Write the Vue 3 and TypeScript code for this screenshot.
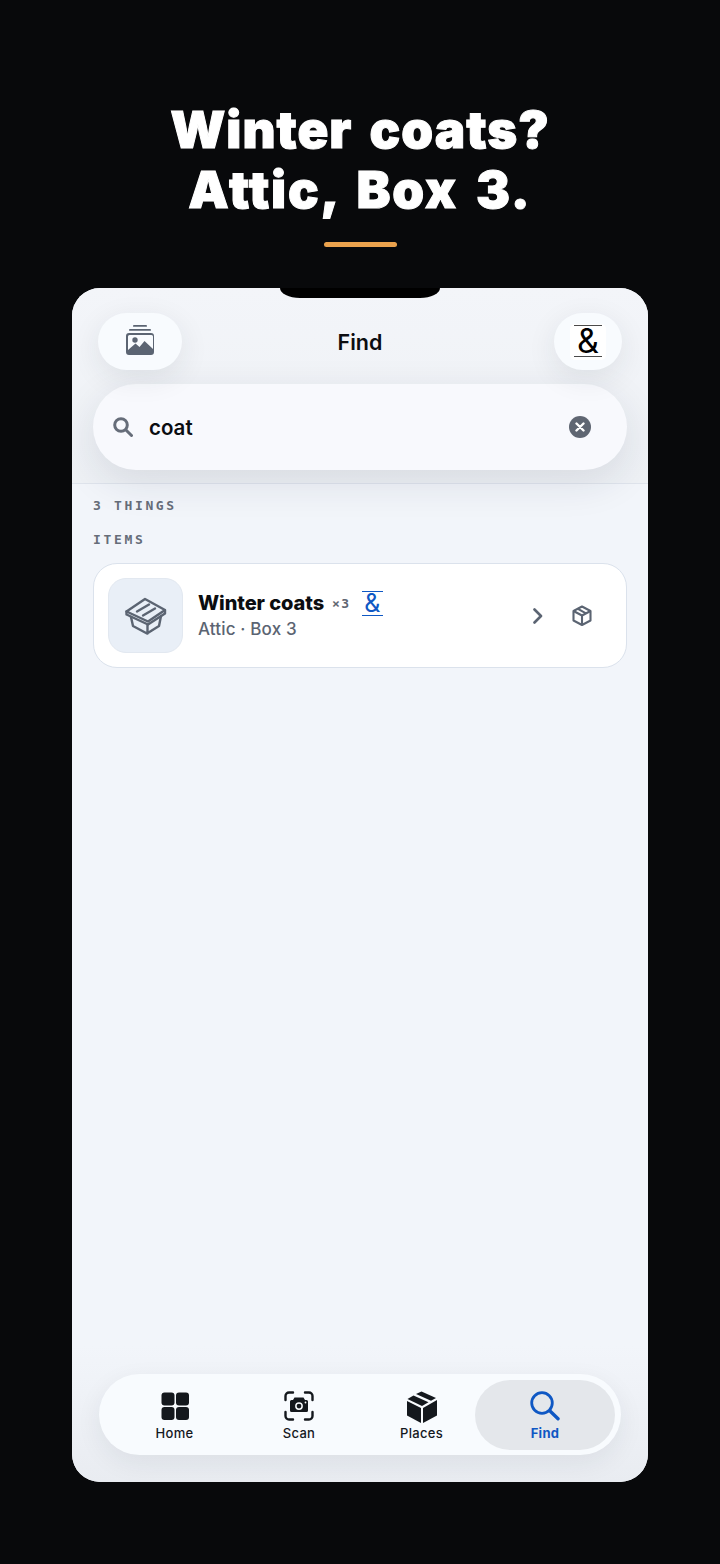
<script setup lang="ts">
type Tab = { label: string; icon: string; active?: boolean };

const tabs: Tab[] = [
  { label: "Home", icon: "home" },
  { label: "Scan", icon: "scan" },
  { label: "Places", icon: "places" },
  { label: "Find", icon: "find", active: true },
];
</script>

<template>
  <div class="page">
    <h1 class="headline">Winter coats?<br /><span class="line2">Attic, Box 3.</span></h1>
    <div class="accent"></div>

    <div class="screen">
      <div class="notch"></div>

      <header class="header">
        <div class="topbar">
          <button class="pill pillLeft">
            <svg class="stackIcon" width="30" height="30" viewBox="0 0 30 30">
              <rect x="8" y="0" width="14" height="1.800" rx="0.900" fill="#5b6472" />
              <rect x="4" y="4" width="22" height="1.800" rx="0.900" fill="#5b6472" />
              <path
                fill="#5b6472"
                fill-rule="evenodd"
                d="M4 8h22a3 3 0 0 1 3 3v16a3 3 0 0 1-3 3H4a3 3 0 0 1-3-3V11a3 3 0 0 1 3-3Zm-1 3.500v13.500l7.500-6.500 4 3.500 5-6 8.500 8V11.500a1.500 1.500 0 0 0-1.500-1.500h-22A1.500 1.500 0 0 0 3 11.500Z"
              />
              <circle cx="10" cy="15" r="2.700" fill="#5b6472" />
            </svg>
          </button>
          <span class="title">Find</span>
          <button class="pill pillRight">
            <span class="ampBox"><span class="amp">&amp;</span></span>
          </button>
        </div>

        <div class="search">
          <svg width="20" height="20" viewBox="0 0 20 20" fill="none" stroke="#666d79" stroke-width="3" stroke-linecap="round">
            <circle cx="8" cy="8" r="6.300" />
            <path d="M13 13l5.500 5.500" />
          </svg>
          <span class="query">coat</span>
          <span class="clear">
            <svg width="10" height="10" viewBox="0 0 10 10" stroke="#fff" stroke-width="2.400" stroke-linecap="round">
              <path d="M1.500 1.500l7 7M8.500 1.500l-7 7" />
            </svg>
          </span>
        </div>
      </header>

      <main class="results">
        <div class="label count">3 THINGS</div>
        <div class="label">ITEMS</div>

        <div class="card">
          <div class="thumb">
            <svg width="42" height="38" viewBox="0 0 42 38" fill="none" stroke="#5b6472" stroke-width="2.400" stroke-linejoin="round" stroke-linecap="round">
              <path d="M1.500 14.500 20 2l20 11-17 11.500Z" />
              <path d="M1.500 14.500v3l21.500 10 17-11v-3" />
              <path d="M12 14.500 24 7.500M18 18.500l12-7" />
              <path d="M6 20l2 9 14 7.500 12-7.500 2-10M22.500 27.500v9" />
            </svg>
          </div>
          <div class="info">
            <div class="nameRow">
              <span class="name">Winter coats</span>
              <span class="qty">×3</span>
              <span class="tag">&amp;</span>
            </div>
            <div class="place">Attic · Box 3</div>
          </div>
          <svg class="chevron" width="12" height="16" viewBox="0 0 12 16" fill="none" stroke="#5b6472" stroke-width="2.600" stroke-linecap="round" stroke-linejoin="round">
            <path d="M2.500 1.500 9 8l-6.500 6.500" />
          </svg>
          <svg class="box" width="20" height="21" viewBox="0 0 20 21" fill="none" stroke="#5b6472" stroke-width="2.100" stroke-linejoin="round">
            <path d="M10 1.500 18.500 6v9.500L10 20l-8.500-4.500V6Z" />
            <path d="M1.500 6 10 10.500 18.500 6M10 10.500V20M5.500 3.700l8.500 4.600" />
          </svg>
        </div>
      </main>

      <div class="navWrap">
        <nav class="nav">
          <div v-for="tab in tabs" :key="tab.label" class="tab" :class="{ active: tab.active }">
            <span class="tabIcon">
              <svg v-if="tab.icon === 'home'" width="30" height="30" viewBox="0 0 30 30" fill="#14181d">
                <rect x="1.500" y="1.500" width="13" height="13" rx="3" />
                <rect x="16" y="1.500" width="13" height="13" rx="3" />
                <rect x="1.500" y="16" width="13" height="13" rx="3" />
                <rect x="16" y="16" width="13" height="13" rx="3" />
              </svg>
              <svg v-else-if="tab.icon === 'scan'" width="30" height="30" viewBox="0 0 30 30" fill="none">
                <path
                  d="M1.500 9V5a3.500 3.500 0 0 1 3.500-3.500h4M21 1.500h4A3.500 3.500 0 0 1 28.500 5v4M28.500 21v4a3.500 3.500 0 0 1-3.500 3.500h-4M9 28.500H5A3.500 3.500 0 0 1 1.500 25v-4"
                  stroke="#14181d"
                  stroke-width="2.400"
                  stroke-linecap="round"
                />
                <path
                  fill="#14181d"
                  fill-rule="evenodd"
                  d="M10.500 6.500h9l1.500 2.500h1.500a1.500 1.500 0 0 1 1.500 1.500v9a1.500 1.500 0 0 1-1.500 1.500h-15A1.500 1.500 0 0 1 6 19.500v-9A1.500 1.500 0 0 1 7.500 9H9Zm4.500 4.700a3.900 3.900 0 1 0 0 7.800 3.900 3.900 0 0 0 0-7.800Z"
                />
                <circle cx="15" cy="15.100" r="2.400" fill="#14181d" />
                <circle cx="21.500" cy="11.500" r="0.900" fill="#fff" />
              </svg>
              <svg v-else-if="tab.icon === 'places'" width="32" height="33" viewBox="0 0 32 33" fill="#14181d">
                <path d="M10 4 15.500 1.500 30 8l-5 2.800Z" />
                <path d="M7.500 5.500 22.500 12.300 16 16 1.500 9Z" />
                <path d="M1 11l14 7v15L1 25.500Z" />
                <path d="M17 18l14-8v15.500L17 33Z" />
              </svg>
              <svg v-else width="30" height="30" viewBox="0 0 30 30" fill="none" stroke="#0f58c4" stroke-width="2.800" stroke-linecap="round">
                <circle cx="12" cy="12" r="10.300" />
                <path d="M20 20l8 7.700" stroke-width="3.400" />
              </svg>
            </span>
            <span class="tabLabel">{{ tab.label }}</span>
          </div>
        </nav>
      </div>
    </div>
  </div>
</template>

<style>
html,
body {
  margin: 0;
  background: #08090b;
}
</style>

<style scoped>
.page {
  box-sizing: border-box;
  width: 720px;
  height: 1564px;
  padding-top: 100px;
  background: #08090b;
  display: flex;
  flex-direction: column;
  align-items: center;
  font-family: Inter, "Liberation Sans", sans-serif;
}

.headline {
  margin: 0;
  color: #fff;
  font-family: Inter, "Liberation Sans", sans-serif;
  font-weight: 900;
  font-size: 51px;
  line-height: 60px;
  text-align: center;
  letter-spacing: 1px;
  word-spacing: 6px;
  -webkit-text-stroke: 1px #fff;
}

.line2 {
  letter-spacing: 1.800px;
}

.accent {
  width: 73px;
  height: 5px;
  margin-top: 22px;
  border-radius: 3px;
  background: #eba24d;
}

.screen {
  position: relative;
  width: 576px;
  height: 1194px;
  margin-top: 41px;
  border-radius: 28px;
  background: #f2f5fa;
  overflow: hidden;
  display: flex;
  flex-direction: column;
}

.notch {
  position: absolute;
  top: 0;
  left: 208px;
  width: 160px;
  height: 10px;
  background: #000;
  border-radius: 0 0 20px 20px / 0 0 10px 10px;
  z-index: 2;
}

.header {
  position: relative;
  z-index: 1;
  box-sizing: border-box;
  height: 196px;
  padding: 25px 21px 0;
  background: linear-gradient(#f3f5f9, #eef1f5);
  border-bottom: 1px solid #dfe4ec;
}

.topbar {
  display: grid;
  grid-template-columns: 1fr auto 1fr;
  align-items: center;
  height: 57px;
  padding: 0 5px;
}

.pill {
  height: 57px;
  border: 0;
  padding: 0;
  border-radius: 29px;
  background: #f8fbfe;
  display: flex;
  align-items: center;
  justify-content: center;
  box-shadow: 0 8px 30px rgba(30, 40, 60, 0.09);
}

.pillLeft {
  width: 84px;
}

.pillRight {
  width: 68px;
  justify-self: end;
}

.stackIcon {
  margin-bottom: 3px;
}

.title {
  font-size: 21.500px;
  font-weight: 600;
  color: #0b0d10;
}

.ampBox {
  width: 36px;
  height: 36px;
  border-radius: 5px;
  background: #fff;
  display: flex;
  align-items: center;
  justify-content: center;
}

.amp {
  box-sizing: border-box;
  width: 28px;
  height: 32px;
  margin-top: -2px;
  border-top: 1.500px solid #4a4a4a;
  border-bottom: 1.500px solid #4a4a4a;
  font-family: Inter, "Liberation Sans", sans-serif;
  font-size: 34px;
  line-height: 29px;
  text-align: center;
  color: #000;
}

.search {
  box-sizing: border-box;
  height: 86px;
  margin-top: 14px;
  padding: 0 36px 0 20px;
  border-radius: 43px;
  background: #f8f9fd;
  display: flex;
  align-items: center;
  box-shadow: 0 12px 40px rgba(30, 40, 60, 0.11);
}

.query {
  flex: 1;
  margin-left: 16px;
  font-size: 20.500px;
  font-weight: 600;
  color: #0b0d10;
}

.clear {
  width: 22px;
  height: 22px;
  border-radius: 50%;
  background: #5f6672;
  display: flex;
  align-items: center;
  justify-content: center;
}

.results {
  flex: 1;
  padding: 14px 21px 0;
}

.label {
  font-family: "DejaVu Sans Mono", monospace;
  font-weight: 700;
  font-size: 13px;
  line-height: 16px;
  letter-spacing: 2.650px;
  color: #666d79;
}

.count {
  margin-bottom: 18px;
}

.card {
  box-sizing: border-box;
  height: 105px;
  margin-top: 15px;
  padding: 0 34px 0 14px;
  border: 1px solid #dbe2ec;
  border-radius: 24px;
  background: #fff;
  display: flex;
  align-items: center;
}

.thumb {
  width: 75px;
  height: 75px;
  border: 1px solid #e2e8f0;
  border-radius: 18px;
  box-sizing: border-box;
  background: #e9eff7;
  display: flex;
  align-items: center;
  justify-content: center;
}

.info {
  flex: 1;
  margin-left: 15px;
  margin-top: -2px;
}

.nameRow {
  display: flex;
  align-items: center;
  height: 28px;
}

.name {
  font-size: 20px;
  font-weight: 800;
  letter-spacing: -0.08px;
  color: #0b0d10;
}

.qty {
  margin-left: 8px;
  font-family: "DejaVu Sans Mono", monospace;
  font-size: 13px;
  font-weight: 700;
  letter-spacing: 1.500px;
  color: #5f6672;
}

.tag {
  box-sizing: border-box;
  margin-left: 11px;
  width: 21px;
  height: 25px;
  border-top: 1.500px solid #0f58c4;
  border-bottom: 1.500px solid #0f58c4;
  font-family: Inter, "Liberation Sans", sans-serif;
  font-size: 25px;
  font-weight: 400;
  line-height: 23px;
  text-align: center;
  color: #0f58c4;
}

.place {
  margin-top: 1px;
  font-size: 17px;
  font-weight: 500;
  letter-spacing: 0.15px;
  line-height: 22px;
  color: #5b6472;
}

.chevron {
  margin-right: 28px;
}

.navWrap {
  box-sizing: border-box;
  height: 136px;
  padding: 28px 27px 0;
  background: linear-gradient(#f2f5fa, #e9ecf1);
}

.nav {
  box-sizing: border-box;
  height: 81px;
  padding: 6px 6px 6px 13px;
  border-radius: 41px;
  background: #f8fbfe;
  display: grid;
  grid-template-columns: 125px 124px 121px 133px;
  box-shadow: 0 8px 26px rgba(30, 40, 60, 0.07);
}

.tab {
  height: 70px;
  display: flex;
  flex-direction: column;
  align-items: center;
  justify-content: center;
  gap: 3px;
  padding-top: 1px;
  box-sizing: border-box;
  border-radius: 35px;
  color: #14181d;
}

.tab.active {
  margin-left: -7px;
  background: #e4e7eb;
  color: #0f58c4;
}

.tabIcon {
  height: 32px;
  display: flex;
  align-items: center;
  justify-content: center;
}

.tabLabel {
  font-size: 13px;
  font-weight: 500;
  line-height: 16px;
  letter-spacing: 0.3px;
}

.active .tabLabel {
  font-weight: 700;
}
</style>
